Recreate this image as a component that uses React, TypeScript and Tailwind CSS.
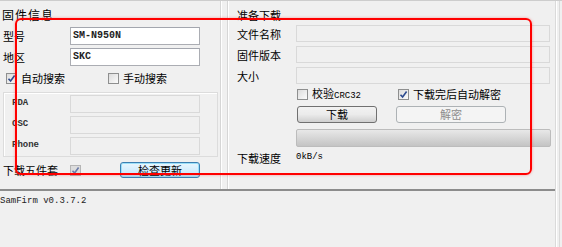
const mono = "font-['Liberation_Mono','Noto_Sans_CJK_SC',monospace]";

function Box({ checked, disabled }: { checked?: boolean; disabled?: boolean }) {
  return (
    <span
      className={`flex h-[11px] w-[11px] shrink-0 items-center justify-center border ${
        disabled ? "border-[#b5b5b5] bg-[#dcdcdc]" : "border-[#8e8f8f] bg-gradient-to-br from-[#dcdcdc] to-[#fbfbfb]"
      }`}
    >
      {checked && (
        <svg viewBox="0 0 9 9" className="h-[9px] w-[9px]">
          <path d="M1.5 4.8 L3.6 7 L7.6 1.6" fill="none" stroke={disabled ? "#6a7aa8" : "#2c4a8e"} strokeWidth="1.6" />
        </svg>
      )}
    </span>
  );
}

function Field({ value, white, className }: { value?: string; white?: boolean; className: string }) {
  return (
    <div
      className={`flex items-center border px-[2px] ${
        white ? "border-[#abadb3] border-t-[#a3a6ae] bg-white" : "border-[#d9d9d9] bg-[#f0f0f0]"
      } ${className}`}
    >
      <span className={`${mono} text-[10px] font-semibold leading-none text-[#222]`}>{value}</span>
    </div>
  );
}

export default function App() {
  return (
    <div className="relative h-[247px] w-[562px] overflow-hidden border-t border-[#cdcdcd] bg-[#f0f0f0] font-['Noto_Sans_CJK_SC',sans-serif] text-[11px] text-black">
      <div className="flex h-full">
        <div className="flex w-[555px] flex-col">
          <div className="flex h-[188px]">
            {/* 固件信息 */}
            <div className="flex w-[218px] flex-col">
              <div className="ml-[2px] pt-[7px] text-[12px] leading-[14px] tracking-[1px]">固件信息</div>
              <div className="mt-[5px] flex flex-col gap-[3px] pl-[3px]">
                <div className="flex h-[18px] items-center">
                  <span className="w-[67px]">型号</span>
                  <Field white value="SM-N950N" className="h-[18px] w-[130px]" />
                </div>
                <div className="flex h-[18px] items-center">
                  <span className="w-[67px]">地区</span>
                  <Field white value="SKC" className="h-[18px] w-[130px]" />
                </div>
              </div>
              <div className="mt-[6px] flex h-[12px] items-center">
                <div className="ml-[6px] flex w-[102px] items-center gap-[4px]">
                  <Box checked />
                  <span>自动搜索</span>
                </div>
                <div className="flex items-center gap-[4px]">
                  <Box />
                  <span>手动搜索</span>
                </div>
              </div>
              <div className="ml-[3px] mt-[8px] flex w-[215px] flex-col gap-[3px] border border-[#dcdcdc] pb-[1px] pt-[2px] shadow-[inset_1px_1px_0_#fff]">
                {["FDA", "CSC", "Phone"].map((l) => (
                  <div key={l} className="flex h-[18px] items-center">
                    <span className={`${mono} ml-[8px] w-[58px] text-[9px] font-bold text-[#333]`}>{l}</span>
                    <Field className="h-[18px] w-[130px]" />
                  </div>
                ))}
              </div>
              <div className="mt-[5px] flex h-[16px] items-center pl-[3px]">
                <span className="w-[67px]">下载五件套</span>
                <Box checked disabled />
                <button className="ml-[39px] flex h-[16px] w-[80px] items-center justify-center rounded-[3px] border border-[#3c7fb1] bg-gradient-to-b from-[#eaf6fd] to-[#bee6fd] text-[11px] leading-none shadow-[inset_0_0_0_1px_#9be0f9]">
                  检查更新
                </button>
              </div>
            </div>

            {/* separators */}
            <div className="flex w-[12px]">
              <div className="ml-[2px] w-[1px] bg-[#d6d6d6]" />
              <div className="w-[1px] bg-white" />
              <div className="ml-[5px] w-[1px] bg-[#d6d6d6]" />
              <div className="w-[1px] bg-white" />
            </div>

            {/* 准备下载 */}
            <div className="flex flex-1 flex-col pl-[7px]">
              <div className="pt-[7px] leading-[14px]">准备下载</div>
              <div className="mt-[3px] flex flex-col gap-[4px]">
                {["文件名称", "固件版本", "大小"].map((l) => (
                  <div key={l} className="flex h-[17px] items-center">
                    <span className="mt-[2px] w-[59px]">{l}</span>
                    <Field className="h-[17px] w-[254px]" />
                  </div>
                ))}
              </div>
              <div className="ml-[59px] mt-[5px] flex h-[11px] items-center">
                <div className="ml-[1px] flex w-[101px] items-center gap-[4px]">
                  <Box />
                  <span>
                    校验<span className={`${mono} text-[9px]`}>CRC32</span>
                  </span>
                </div>
                <div className="flex items-center gap-[4px]">
                  <Box checked />
                  <span>下载完后自动解密</span>
                </div>
              </div>
              <div className="ml-[59px] mt-[6px] flex h-[17px] items-center">
                <button className="ml-[1px] flex h-[17px] w-[80px] items-center justify-center rounded-[3px] border border-[#707070] bg-gradient-to-b from-[#f2f2f2] via-[#ebebeb] to-[#cfcfcf] text-[11px] leading-none">
                  下载
                </button>
                <button className="ml-[19px] flex h-[17px] w-[110px] items-center justify-center rounded-[3px] border border-[#adb2b5] bg-[#f4f4f4] text-[11px] leading-none text-[#8d8d8d]">
                  解密
                </button>
              </div>
              <div className="ml-[59px] mt-[6px] h-[18px] w-[255px] rounded-[2px] border border-[#bcbcbc] bg-gradient-to-b from-[#e8e8e8] via-[#d6d6d6] to-[#c4c4c4]" />
              <div className="mt-[4px] flex h-[14px] items-center">
                <span className="w-[59px]">下载速度</span>
                <span className={`${mono} text-[9px]`}>0kB/s</span>
              </div>
            </div>
          </div>

          <div className="h-[2px] bg-[#8c8c8c]" />
          <div className={`${mono} pt-[4px] text-[9px] leading-[12px] text-[#222]`}>SamFirm v0.3.7.2</div>
        </div>
        <div className="flex flex-1">
          <div className="w-[1px] bg-[#dadada]" />
          <div className="w-[1px] bg-white" />
          <div className="ml-[2px] w-[1px] bg-[#dadada]" />
        </div>
      </div>

      <div className="absolute left-[15px] top-[17px] h-[157px] w-[517px] rounded-[6px] border-2 border-[#ff0000] shadow-[0_0_3px_rgba(255,0,0,0.35)]" />
    </div>
  );
}
